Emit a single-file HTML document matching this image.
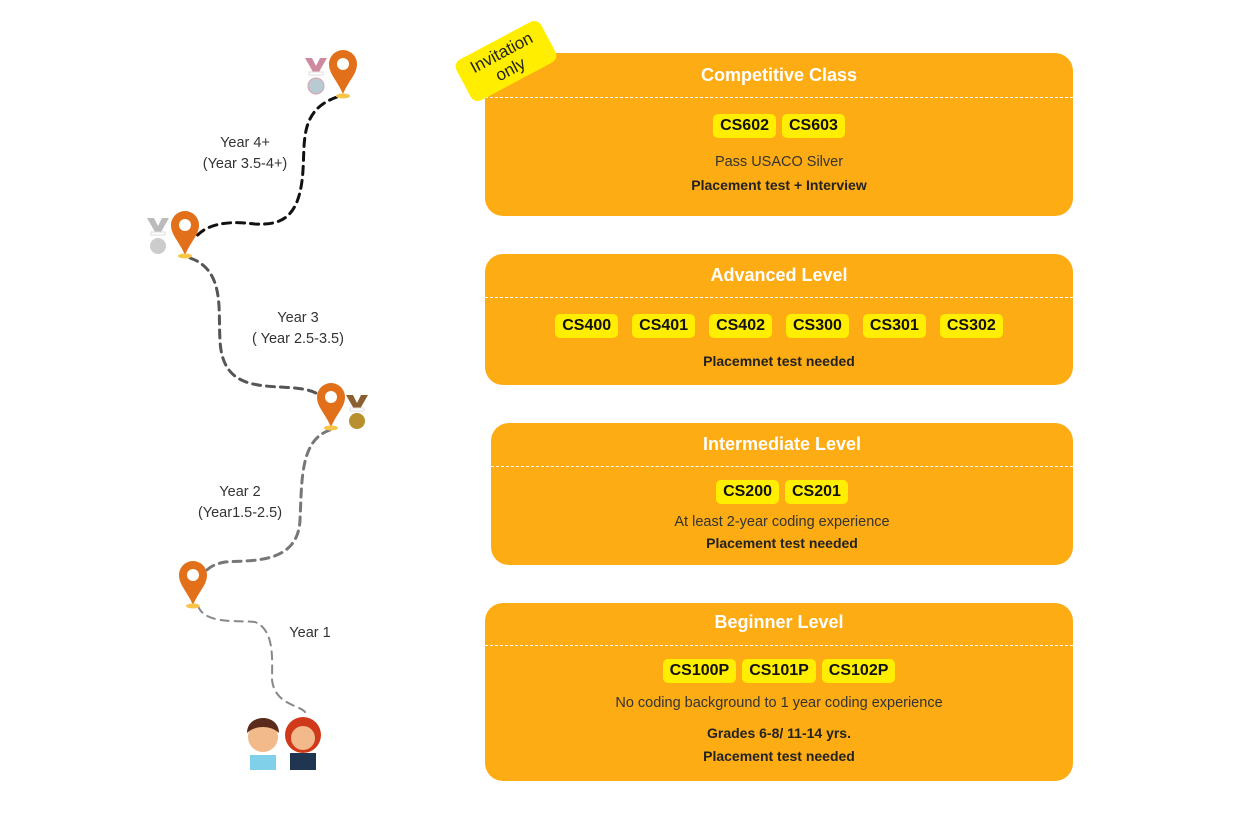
<!DOCTYPE html>
<html><head><meta charset="utf-8"><style>
body{margin:0;width:1254px;height:813px;background:#fff;position:relative;overflow:hidden;font-family:"Liberation Sans",sans-serif;color:#333}
.card{position:absolute;background:#FDAC14;border-radius:18px}
.card h2{margin:0;position:absolute;left:0;right:0;text-align:center;color:#fff;font-size:18px;font-weight:bold}
.card .ln{position:absolute;left:0;right:0;border-top:1px dashed #fff}
.row{position:absolute;left:0;right:0;text-align:center}
.chip{display:inline-block;background:#FFEE00;color:#111;font-weight:bold;font-size:16px;padding:2px 7px;border-radius:5px;margin:0 3px;line-height:20px}
.adv .chip{margin:0 7px}
.t{position:absolute;left:0;right:0;text-align:center;font-size:14.5px;color:#333}
.b{font-weight:bold;font-size:14px;color:#222}
.lbl{position:absolute;font-size:14.5px;color:#333;text-align:center}
</style></head><body>
<svg width="1254" height="813" style="position:absolute;left:0;top:0">
<g fill="none" stroke-width="3" stroke-dasharray="8 6" stroke-linecap="round">
<path d="M337 97 C300 110 305 140 303 170 C300 220 280 225 255 224 C225 220 205 225 195 238" stroke="#111"/>
<path d="M190 258 C225 270 218 310 220 340 C222 390 260 385 295 388 C315 390 320 395 325 400" stroke="#555"/>
<path d="M330 430 C300 440 302 480 300 520 C298 565 250 560 225 562 C210 565 205 570 200 580" stroke="#777"/>
<path d="M198 606 C205 625 240 620 255 622 C275 630 272 660 272 680 C275 705 300 705 305 712" stroke="#888" stroke-width="2"/>
</g>
<g fill="#E2701A">
<path d="M343 50 a14 14 0 0 1 14 14 c0 10 -8 16 -14 30 c-6 -14 -14 -20 -14 -30 a14 14 0 0 1 14 -14z"/>
<path d="M185 211 a14 14 0 0 1 14 14 c0 10 -8 16 -14 30 c-6 -14 -14 -20 -14 -30 a14 14 0 0 1 14 -14z"/>
<path d="M331 383 a14 14 0 0 1 14 14 c0 10 -8 16 -14 30 c-6 -14 -14 -20 -14 -30 a14 14 0 0 1 14 -14z"/>
<path d="M193 561 a14 14 0 0 1 14 14 c0 10 -8 16 -14 30 c-6 -14 -14 -20 -14 -30 a14 14 0 0 1 14 -14z"/>
</g>
<g fill="#fff"><circle cx="343" cy="64" r="6"/><circle cx="185" cy="225" r="6"/><circle cx="331" cy="397" r="6"/><circle cx="193" cy="575" r="6"/></g>
<g fill="#F7C648"><ellipse cx="343" cy="96" rx="7" ry="2.5"/><ellipse cx="185" cy="256" rx="7" ry="2.5"/><ellipse cx="331" cy="428" rx="7" ry="2.5"/><ellipse cx="193" cy="606" rx="7" ry="2.5"/></g>
<!-- medals -->
<path d="M305 58 h7 l4 8 l4 -8 h7 l-8 14 h-6z" fill="#d08aa0"/><rect x="309" y="72" width="14" height="3" fill="#fff" stroke="#ddd"/><circle cx="316" cy="86" r="8" fill="#b8cad2" stroke="#d9a0b0"/>
<path d="M147 218 h7 l4 8 l4 -8 h7 l-8 14 h-6z" fill="#bbb"/><rect x="151" y="232" width="14" height="3" fill="#fff" stroke="#ddd"/><circle cx="158" cy="246" r="8" fill="#ccc"/>
<path d="M346 395 h7 l4 8 l4 -8 h7 l-8 14 h-6z" fill="#8a6030"/><rect x="350" y="408" width="14" height="3" fill="#fff" stroke="#ddd"/><circle cx="357" cy="421" r="8" fill="#b8902e"/>
<!-- kids -->
<circle cx="263" cy="737" r="15" fill="#F2B98A"/><path d="M247 733 c0 -20 32 -20 32 0 c-8 -8 -24 -8 -32 0z" fill="#5a2b1a"/>
<path d="M250 755 h26 v15 h-26z" fill="#7fd0e8"/>
<circle cx="303" cy="735" r="18" fill="#D03A1A"/><circle cx="303" cy="738" r="12" fill="#F2B98A"/>
<path d="M290 753 h26 v17 h-26z" fill="#1f3550"/>
</svg>
<div class="lbl" style="left:195px;top:133px;width:100px;line-height:21px">Year 4+<br>(Year 3.5-4+)</div>
<div class="lbl" style="left:243px;top:308px;width:110px;line-height:21px">Year 3<br>( Year 2.5-3.5)</div>
<div class="lbl" style="left:190px;top:482px;width:100px;line-height:21px">Year 2<br>(Year1.5-2.5)</div>
<div class="lbl" style="left:285px;top:625px;width:50px">Year 1</div>

<div class="card" style="left:485px;top:53px;width:588px;height:163px">
<h2 style="top:12px">Competitive Class</h2><div class="ln" style="top:44px"></div>
<div class="row" style="top:61px"><span class="chip">CS602</span><span class="chip">CS603</span></div>
<div class="t" style="top:101px">Pass USACO Silver</div>
<div class="t b" style="top:124px">Placement test + Interview</div>
</div>
<div style="position:absolute;left:458px;top:38px;width:96px;height:46px;background:#FFEE00;border-radius:8px;transform:rotate(-28deg);text-align:center;font-size:17px;line-height:19px;color:#222;padding-top:4px;box-sizing:border-box">Invitation<br>only</div>

<div class="card adv" style="left:485px;top:254px;width:588px;height:131px">
<h2 style="top:11px">Advanced Level</h2><div class="ln" style="top:43px"></div>
<div class="row" style="top:60px"><span class="chip">CS400</span><span class="chip">CS401</span><span class="chip">CS402</span><span class="chip">CS300</span><span class="chip">CS301</span><span class="chip">CS302</span></div>
<div class="t b" style="top:99px">Placemnet test needed</div>
</div>
<div class="card" style="left:491px;top:423px;width:582px;height:142px">
<h2 style="top:11px">Intermediate Level</h2><div class="ln" style="top:43px"></div>
<div class="row" style="top:57px"><span class="chip">CS200</span><span class="chip">CS201</span></div>
<div class="t" style="top:91px">At least 2-year coding experience</div>
<div class="t b" style="top:112px">Placement test needed</div>
</div>
<div class="card" style="left:485px;top:603px;width:588px;height:178px">
<h2 style="top:9px">Beginner Level</h2><div class="ln" style="top:42px"></div>
<div class="row" style="top:56px"><span class="chip">CS100P</span><span class="chip">CS101P</span><span class="chip">CS102P</span></div>
<div class="t" style="top:92px">No coding background to 1 year coding experience</div>
<div class="t b" style="top:122px">Grades 6-8/ 11-14 yrs.</div>
<div class="t b" style="top:145px">Placement test needed</div>
</div>
</body></html>
